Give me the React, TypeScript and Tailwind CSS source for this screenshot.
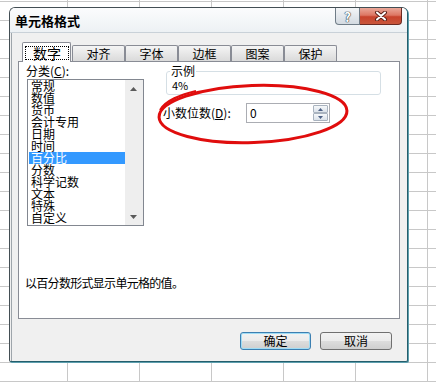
import React from "react";

const categories = ["常规", "数值", "货币", "会计专用", "日期", "时间", "百分比", "分数", "科学记数", "文本", "特殊", "自定义"];
const tabs = ["对齐", "字体", "边框", "图案", "保护"];

function Tab({ label }: { label: string }) {
  return (
    <div className="w-[53px] h-[16px] mb-[1px] border border-b-0 border-[#898c95] rounded-t-[2px] bg-[linear-gradient(180deg,#f5f5f5,#dadada)] flex items-center justify-center text-[12px] leading-none">
      {label}
    </div>
  );
}

function ScrollArrow({ down }: { down?: boolean }) {
  return (
    <div className="w-[17px] h-[17px] flex items-center justify-center">
      <svg width="7" height="4" viewBox="0 0 7 4">
        {down ? <polygon points="0,0 7,0 3.5,4" fill="#5a5a5a" /> : <polygon points="0,4 7,4 3.5,0" fill="#5a5a5a" />}
      </svg>
    </div>
  );
}

function SpinHalf({ down }: { down?: boolean }) {
  return (
    <div className="h-[8px] border border-[#a9b3bf] rounded-[1px] bg-[linear-gradient(180deg,#f6f8fa,#dbe2ea)] flex items-center justify-center">
      <svg width="5" height="3" viewBox="0 0 5 3">
        {down ? <polygon points="0,0 5,0 2.5,3" fill="#4d6185" /> : <polygon points="0,3 5,3 2.5,0" fill="#4d6185" />}
      </svg>
    </div>
  );
}

function DlgButton({ label, isDefault }: { label: string; isDefault?: boolean }) {
  return (
    <div
      className={
        isDefault
          ? "w-[71px] h-[18px] border border-[#3c7fb1] rounded-[3px] shadow-[inset_0_0_0_1px_#9fdcf5] bg-[linear-gradient(180deg,#f2f2f2_0%,#ebebeb_50%,#dddddd_51%,#cfcfcf_100%)] flex items-center justify-center text-[12px] leading-none"
          : "w-[72px] h-[18px] border border-[#707070] rounded-[3px] bg-[linear-gradient(180deg,#f2f2f2_0%,#ebebeb_50%,#dddddd_51%,#cfcfcf_100%)] flex items-center justify-center text-[12px] leading-none"
      }
    >
      {label}
    </div>
  );
}

export default function App() {
  return (
    <div className="relative w-[436px] h-[382px] overflow-hidden bg-white bg-[linear-gradient(to_right,#c8c8c8_1px,transparent_1px),linear-gradient(to_bottom,#c8c8c8_1px,transparent_1px)] bg-[size:72px_19px] bg-[position:-5px_1px] pt-[7px] font-['Noto_Sans_CJK_SC','Liberation_Sans',sans-serif] text-black">
      {/* dialog window */}
      <div className="ml-[9px] w-[399px] h-[355px] border border-[#434e54] border-r-[#245e6c] border-b-[#245e6c] rounded-t-[6px] rounded-b-[2px] shadow-[1px_1px_0_#5d9fae] bg-[#f0f0f0] flex flex-col overflow-hidden">
        {/* title bar */}
        <div className="h-[25px] flex items-start border-b border-[#c9d1d8] bg-[linear-gradient(180deg,#fbfcfd,#edf1f4)]">
          <div className="self-center pl-[5px] text-[13px] font-bold leading-none">单元格格式</div>
          <div className="ml-auto mr-[5px] flex">
            <div className="w-[25px] h-[17px] border border-t-0 border-[#6f7c87] rounded-bl-[4px] bg-[linear-gradient(180deg,#f3f5f7,#d3dae1)] flex items-center justify-center text-[13px] font-bold leading-none text-white [text-shadow:0_0_1px_#2f3d48,0_0_1px_#2f3d48,0_0_1px_#2f3d48]">
              ?
            </div>
            <div className="w-[42px] h-[17px] border border-t-0 border-l-0 border-[#6b2a22] rounded-br-[4px] bg-[linear-gradient(180deg,#eaa899_0%,#dd7763_45%,#c8432c_55%,#c9563c_100%)] flex items-center justify-center">
              <svg width="14" height="10" viewBox="0 0 14 10">
                <path d="M3 1.5 L11 8.5 M11 1.5 L3 8.5" stroke="#5b2219" strokeWidth="4" strokeLinecap="round" />
                <path d="M3 1.5 L11 8.5 M11 1.5 L3 8.5" stroke="#ffffff" strokeWidth="2" strokeLinecap="round" />
              </svg>
            </div>
          </div>
        </div>

        {/* client area */}
        <div className="flex-1 ml-[1px] border-l border-[#9ea5ab] flex flex-col">
          {/* tabs */}
          <div className="mt-[9px] ml-[10px] h-[20px] flex items-end relative z-10">
            <div className="w-[49px] h-[20px] border border-b-0 border-[#898c95] rounded-t-[2px] bg-white flex justify-center">
              <div className="mt-[3px] ml-[1px] w-[44px] h-[14px] border border-dotted border-black flex items-center justify-center text-[14px] leading-none">
                数字
              </div>
            </div>
            <div className="ml-[1px] flex gap-0">
              {tabs.map(t => (
                <Tab key={t} label={t} />
              ))}
            </div>
          </div>

          {/* tab panel */}
          <div className="ml-[6px] -mt-px w-[382px] h-[258px] border border-[#898c95] bg-white flex flex-col">
            <div className="flex pt-[2px]">
              <div className="pl-[7px]">
                <div className="text-[12px] leading-[14px]">
                  分类(<span className="underline">C</span>):
                </div>
                <div className="mt-[1px] ml-[1px] w-[117px] h-[147px] border border-[#828790] flex">
                  <div className="flex-1 pl-[1px]">
                    {categories.map(c => (
                      <div
                        key={c}
                        className={
                          c === "百分比"
                            ? "h-[12px] pl-[2px] text-[12px] leading-[12px] bg-[#3399ff] text-white"
                            : "h-[12px] pl-[2px] text-[12px] leading-[12px]"
                        }
                      >
                        {c}
                      </div>
                    ))}
                  </div>
                  <div className="w-[18px] bg-[#eeeeee] flex flex-col justify-between">
                    <ScrollArrow />
                    <ScrollArrow down />
                  </div>
                </div>
              </div>

              <div className="ml-[19px]">
                <fieldset className="ml-[3px] w-[215px] border border-[#d5dfe5] rounded-[3px] px-[3px]">
                  <legend className="px-[1px] text-[12px] leading-[14px]">示例</legend>
                  <div className="h-[16px] pl-[2px] text-[11px] leading-[14px]">4%</div>
                </fieldset>
                <div className="mt-[8px] flex items-center">
                  <div className="w-[83px] text-[12px] leading-[14px]">
                    小数位数(<span className="underline">D</span>):
                  </div>
                  <div className="w-[84px] h-[20px] border border-[#abadb3] bg-white flex items-center pl-[3px] pr-[1px]">
                    <div className="flex-1 text-[12px] leading-none">0</div>
                    <div className="w-[15px] flex flex-col">
                      <SpinHalf />
                      <SpinHalf down />
                    </div>
                  </div>
                </div>
              </div>
            </div>

            <div className="mt-[50px] pl-[6px] text-[12px] leading-[14px] tracking-[-0.7px]">以百分数形式显示单元格的值。</div>
          </div>

          {/* buttons */}
          <div className="mt-[13px] pr-[15px] flex justify-end gap-[9px]">
            <DlgButton label="确定" isDefault />
            <DlgButton label="取消" />
          </div>
        </div>
      </div>

      {/* red annotation circle */}
      <svg className="absolute left-0 top-0 pointer-events-none" width="436" height="382" viewBox="0 0 436 382">
        <ellipse cx="253" cy="114" rx="94" ry="28.5" transform="rotate(-2 253 114)" fill="none" stroke="#e00d0d" strokeWidth="3" />
        <path d="M160 110 C 166 100, 180 95, 196 91" fill="none" stroke="#e00d0d" strokeWidth="2" />
      </svg>
    </div>
  );
}
